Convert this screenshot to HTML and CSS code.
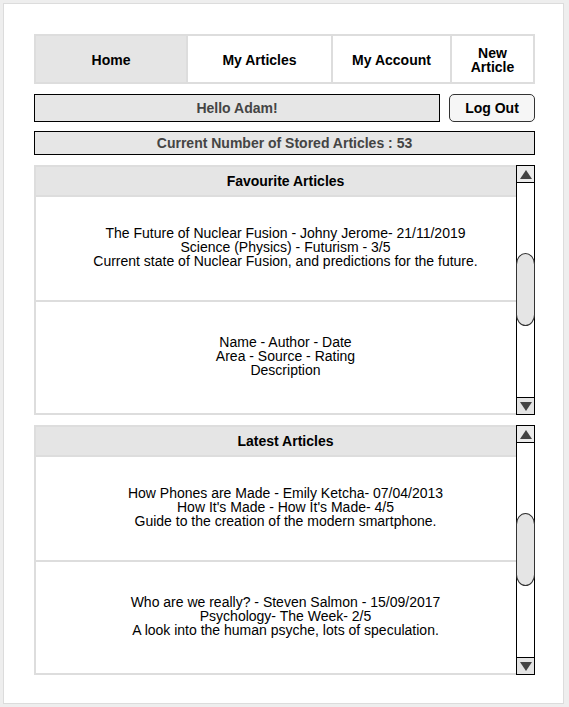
FILE: index.html
```html
<!DOCTYPE html>
<html lang="en">
<head>
<meta charset="UTF-8">
<link rel="stylesheet" href="styles.css">
<title>Home</title>
</head>
<body>
<div class="page">

  <div class="nav">
    <div class="nav-item nav-home active">Home</div>
    <div class="nav-item nav-articles">My Articles</div>
    <div class="nav-item nav-account">My Account</div>
    <div class="nav-item nav-new">New<br>Article</div>
  </div>

  <div class="user-row">
    <div class="greeting">Hello Adam!</div>
    <button class="logout">Log Out</button>
  </div>

  <div class="counter">Current Number of Stored Articles : 53</div>

  <div class="panel">
    <div class="list">
      <div class="list-head">Favourite Articles</div>
      <div class="article first">
        The Future of Nuclear Fusion - Johny Jerome- 21/11/2019<br>
        Science (Physics) - Futurism - 3/5<br>
        Current state of Nuclear Fusion, and predictions for the future.
      </div>
      <div class="article">
        Name - Author - Date<br>
        Area - Source - Rating<br>
        Description
      </div>
    </div>
    <div class="scrollbar">
      <div class="arrow up"><span></span></div>
      <div class="track"><div class="thumb"></div></div>
      <div class="arrow down"><span></span></div>
    </div>
  </div>

  <div class="panel">
    <div class="list">
      <div class="list-head">Latest Articles</div>
      <div class="article first">
        How Phones are Made - Emily Ketcha- 07/04/2013<br>
        How It's Made - How It's Made- 4/5<br>
        Guide to the creation of the modern smartphone.
      </div>
      <div class="article">
        Who are we really? - Steven Salmon - 15/09/2017<br>
        Psychology- The Week- 2/5<br>
        A look into the human psyche, lots of speculation.
      </div>
    </div>
    <div class="scrollbar">
      <div class="arrow up"><span></span></div>
      <div class="track"><div class="thumb"></div></div>
      <div class="arrow down"><span></span></div>
    </div>
  </div>

</div>
</body>
</html>
```

FILE: styles.css
```css
html, body {margin: 0; padding: 0;}
html {background-color: #eeeeee; font-family: 'Liberation Sans', Arial, sans-serif; font-size: 14px; color: #000;}
body {padding: 3px;}

.page {
  width: 501px; height: 669px; padding: 30px 28px 0 30px;
  background-color: #fff; border: 1px solid #dcdcdc;
}

/* top navigation */
.nav {display: flex; height: 46px; border: 2px solid #dddddd; font-weight: bold;}
.nav-item {
  display: flex; align-items: center; justify-content: center; text-align: center;
  padding-top: 2px; line-height: 14px; border-right: 2px solid #dddddd;
}
.nav-item:last-child {border-right: none;}
.nav-home {width: 150px;}
.nav-articles {width: 143px;}
.nav-account {width: 117px;}
.nav-new {flex: 1;}
.active {background-color: #e5e5e5;}

/* greeting + log out */
.user-row {display: flex; gap: 9px; margin-top: 10px; height: 28px;}
.greeting {
  flex: 1; display: flex; align-items: center; justify-content: center;
  background-color: #e6e6e6; border: 1px solid #000; color: #444; font-weight: bold;
}
.logout {
  width: 86px; padding: 0; font-family: inherit; font-size: 14px; font-weight: bold; color: #000;
  background-color: #f6f6f6; border: 1px solid #333; border-radius: 5px;
}

.counter {
  margin-top: 9px; height: 22px; display: flex; align-items: center; justify-content: center;
  background-color: #e6e6e6; border: 1px solid #000; color: #444; font-weight: bold;
}

/* article panels, the scrollbar sits over the right edge of the list */
.panel {position: relative; height: 250px; margin-top: 10px;}
.list {
  height: 246px; display: flex; flex-direction: column;
  border: 2px solid #dddddd; border-right: none;
}
.list-head {
  height: 28px; display: flex; align-items: center; justify-content: center;
  background-color: #e5e5e5; border-bottom: 2px solid #dddddd; font-weight: bold;
}
.article {
  flex: 1; display: flex; align-items: center; justify-content: center;
  flex-direction: column; text-align: center; line-height: 14px; padding-bottom: 4px;
}
.article.first {flex: none; height: 99px; border-bottom: 2px solid #dddddd;}

.scrollbar {
  position: absolute; top: 0; right: 0; bottom: 0; width: 17px;
  display: flex; flex-direction: column; border: 1px solid #000;
}
.arrow {height: 16px; display: flex; align-items: center; justify-content: center; background-color: #ececec;}
.arrow.up {border-bottom: 1px solid #000;}
.arrow.down {border-top: 1px solid #000; background-color: #e4e4e4;}
.arrow span {width: 0; height: 0; border-left: 6px solid transparent; border-right: 6px solid transparent;}
.arrow.up span {border-bottom: 9px solid #444;}
.arrow.down span {border-top: 9px solid #444;}
.track {flex: 1; background-color: #fff;}
.thumb {
  height: 71px; margin: 70px -1px 0; background-color: #e5e5e5;
  border: 1px solid #333; border-radius: 10px / 12px;
}
```
